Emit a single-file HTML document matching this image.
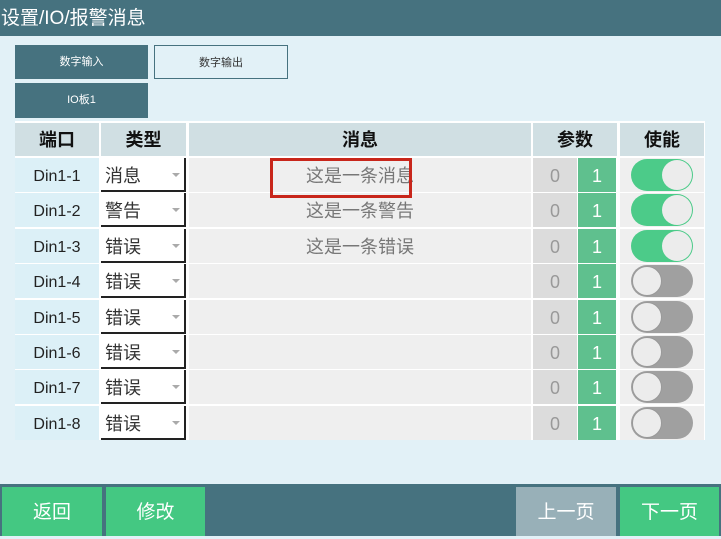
<!DOCTYPE html>
<html><head><meta charset="utf-8"><style>
*{margin:0;padding:0;box-sizing:border-box}
body{width:721px;height:536px;overflow:hidden;background:#e2f1f7;position:relative;font-family:"Liberation Sans","Noto Sans CJK SC",sans-serif}
.a{position:absolute}
.title{left:0;top:0;width:721px;height:36px;background:#46727f;color:#fff;font-size:19px;line-height:38px;padding-left:1px}
.tab{height:34px;font-size:11px;line-height:34px;text-align:center}
.hd{top:123px;height:33px;background:#d0dfe3;font-weight:bold;font-size:18px;line-height:34px;text-align:center;color:#111}
.c{height:34px;line-height:37px;text-align:center;font-size:16px}
.port{left:15px;width:84px;background:#dcf0f7;color:#222}
.type{left:101px;width:85px;background:#fff;text-align:left;padding-left:4px;font-size:18px;color:#333;border-right:2px solid #222;border-bottom:2px solid #222}
.arr{position:absolute;right:4px;top:15px;border-left:4px solid transparent;border-right:4px solid transparent;border-top:4px solid #aaa}
.msg{left:189px;width:342px;background:#efefef;color:#777;font-size:18px}
.p0{left:533px;width:44px;background:#dcdcdc;color:#999;font-size:18px}
.p1{left:578px;width:38px;background:#5fc08e;color:#fff;font-size:18px}
.en{left:620px;width:84px;background:#efefef}
.tg{position:absolute;left:11px;top:1px;width:62px;height:32px;border-radius:16px}
.tg i{position:absolute;top:1px;width:30px;height:30px;border-radius:50%;background:#ececec}
.bb{top:487px;height:49px;color:#fff;font-size:19px;line-height:52px;text-align:center}
</style></head><body>
<div class="a title">设置/IO/报警消息</div>
<div class="a tab" style="left:15px;top:45px;width:133px;background:#46727f;color:#fff">数字输入</div>
<div class="a tab" style="left:154px;top:45px;width:134px;border:1px solid #46727f;background:#e2f1f7;color:#333">数字输出</div>
<div class="a tab" style="left:15px;top:83px;width:133px;height:35px;background:#46727f;color:#fff">IO板1</div>
<div class="a" style="left:15px;top:121px;width:690px;height:319px;background:#fff"></div>
<div class="a hd" style="left:15px;width:84px">端口</div>
<div class="a hd" style="left:101px;width:85px">类型</div>
<div class="a hd" style="left:189px;width:342px">消息</div>
<div class="a hd" style="left:533px;width:84px">参数</div>
<div class="a hd" style="left:620px;width:84px">使能</div>
<div id="rows"></div>
<div class="a" style="left:270px;top:158px;width:142px;height:40px;border:3px solid #c8261b"></div>
<div class="a" style="left:0;top:484px;width:721px;height:52px;background:#46727f"></div>
<div class="a bb" style="left:2px;width:100px;background:#44c882">返回</div>
<div class="a bb" style="left:106px;width:99px;background:#44c882">修改</div>
<div class="a bb" style="left:516px;width:100px;background:#98b0b8">上一页</div>
<div class="a bb" style="left:620px;width:99px;background:#44c882">下一页</div>
<script>
var t=["消息","警告","错误","错误","错误","错误","错误","错误"],m=["这是一条消息","这是一条警告","这是一条错误","","","","",""],h="";
for(var i=0;i<8;i++){var y=Math.round(158+i*35.4),on=i<3;
h+='<div class="a c port" style="top:'+y+'px">Din1-'+(i+1)+'</div>'+
'<div class="a c type" style="top:'+y+'px">'+t[i]+'<span class="arr"></span></div>'+
'<div class="a c msg" style="top:'+y+'px">'+m[i]+'</div>'+
'<div class="a c p0" style="top:'+y+'px">0</div><div class="a c p1" style="top:'+y+'px">1</div>'+
'<div class="a c en" style="top:'+y+'px"><div class="tg" style="background:'+(on?'#4ccb89':'#a0a0a0')+'"><i style="'+(on?'right:1px':'left:1px;border:1px solid #999')+'"></i></div></div>';}
document.getElementById('rows').innerHTML=h;
</script>
</body></html>
